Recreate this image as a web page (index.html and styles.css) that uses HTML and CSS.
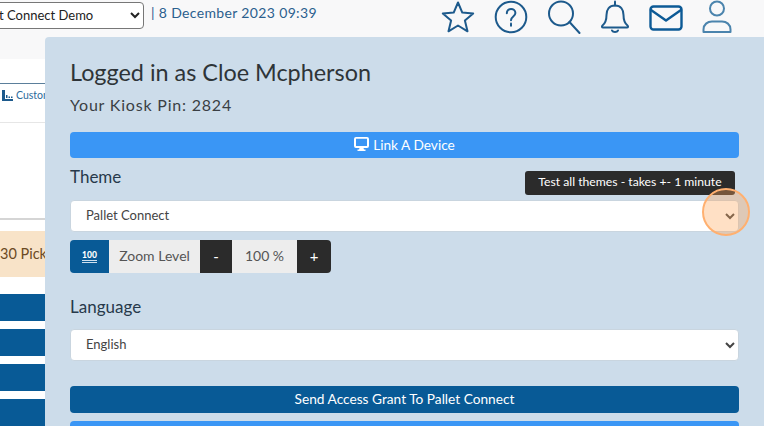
FILE: index.html
```html
<!DOCTYPE html>
<html lang="en">

<head>
    <meta charset="UTF-8">
    <meta name="viewport" content="width=device-width, initial-scale=1.0">
    <title>Pallet Connect</title>
    <link rel="stylesheet" href="styles.css">
</head>

<body>

    <!-- Top bar -->
    <header class="topbar">
        <select class="site-select">
            <option>Pallet Connect Demo</option>
        </select>
        <span class="date">| 8 December 2023 09:39</span>
        <nav class="top-icons">
            <svg class="icon" width="34" height="34" viewBox="0 0 34 34"><path d="M17 2.500l4.300 10.100 10.900.9-8.300 7.100 2.600 10.700L17 25.500l-9.500 5.800 2.600-10.700-8.300-7.100 10.900-.9z"/></svg>
            <svg class="icon" width="34" height="34" viewBox="0 0 34 34"><circle cx="17" cy="17" r="15.300"/><path d="M12.800 13.300c0-6 8.600-5.600 8.600-.3 0 3.500-4.400 3.400-4.400 7.200"/><path d="M17 23.500v2.200"/></svg>
            <svg class="icon" width="34" height="34" viewBox="0 0 34 34"><circle cx="14" cy="13.500" r="12"/><path d="M22.500 22l10 11"/></svg>
            <svg class="icon" width="30" height="34" viewBox="0 0 30 34"><path d="M15 5.500c-6 0-8.500 4.500-8.500 9.500 0 6.500-1.500 8.500-4 10.500-1 .9-.6 2 .6 2h23.800c1.200 0 1.600-1.100.6-2-2.500-2-4-4-4-10.500 0-5-2.500-9.500-8.500-9.500z"/><path d="M15 5.500V1.500"/><path d="M12 30.500c1 2 5 2 6 0"/></svg>
            <svg class="icon icon-mail" width="34" height="26" viewBox="0 0 34 26"><rect x="1.500" y="1.500" width="31" height="23" rx="3"/><path d="M2 5l15 10.500L32 5"/></svg>
            <svg class="icon icon-user" width="30" height="34" viewBox="0 0 30 34"><circle cx="15" cy="8.500" r="7"/><path d="M1.500 32v-2.500c0-5 4-8 8.500-8h10c4.500 0 8.500 3 8.500 8V32z"/></svg>
        </nav>
    </header>

    <!-- Page underneath the panel -->
    <main class="page">
        <div class="tabs">
            <svg class="tab-icon" width="11" height="11" viewBox="0 0 11 11"><path d="M0 0h3v9h8v2H0z"/><path d="M4 5h1.500v3H4zM6.500 6.500H8V8H6.500zM9 6.500h1.500V8H9z"/></svg>
            <span>Customer</span>
        </div>
        <div class="notice-area">
            <div class="notice">30 Pickups</div>
        </div>
        <div class="page-bar"></div>
        <div class="page-bar"></div>
        <div class="page-bar"></div>
        <div class="page-bar"></div>
    </main>

    <!-- Profile panel -->
    <aside class="panel">
        <h1>Logged in as Cloe Mcpherson</h1>
        <p class="pin">Your Kiosk Pin: 2824</p>

        <button class="btn btn-light-blue">
            <svg width="15" height="14" viewBox="0 0 15 14"><path d="M2 0h11a2 2 0 0 1 2 2v7a2 2 0 0 1-2 2H9.500l.5 1.500h1.500V14h-8v-1.500H5L5.500 11H2a2 2 0 0 1-2-2V2a2 2 0 0 1 2-2zm0 1.800V9h11V1.800z"/></svg>
            Link A Device
        </button>

        <label class="field-label theme-label">Theme</label>
        <select class="field-select">
            <option>Pallet Connect</option>
        </select>

        <div class="zoom-group">
            <span class="zoom-icon"><span class="hundred">100</span></span>
            <span class="zoom-text zoom-name">Zoom Level</span>
            <button class="zoom-btn zoom-minus">-</button>
            <span class="zoom-text zoom-value">100 %</span>
            <button class="zoom-btn zoom-plus">+</button>
        </div>

        <label class="field-label language-label">Language</label>
        <select class="field-select">
            <option>English</option>
        </select>

        <button class="btn btn-dark-blue">Send Access Grant To Pallet Connect</button>
        <button class="btn btn-light-blue btn-last"></button>

        <div class="tooltip">Test all themes - takes +- 1 minute</div>
        <div class="spotlight"></div>
    </aside>

</body>

</html>
```

FILE: styles.css
```css
* {
    box-sizing: border-box;
    margin: 0;
    padding: 0;
}

html,
body {
    height: 426px;
    overflow: hidden;
}

body {
    position: relative;
    font-family: 'Lato', 'Open Sans', sans-serif;
    background-color: #fff;
    color: #333;
}

.topbar {
    display: flex;
    align-items: flex-start;
    height: 59px;
    background-color: #f8f8f9;
}

.site-select {
    width: 182px;
    height: 27px;
    margin: 2px 0 0 -38px;
    padding: 0 0 2px 5px;
    font-family: inherit;
    font-size: 13px;
    color: #222;
    background-color: #fff;
    border: 1px solid #777;
    border-radius: 4px;
}

.date {
    margin: 4px 0 0 7px;
    font-size: 14px;
    letter-spacing: 0.35px;
    color: #2b5f8e;
}

.top-icons {
    display: flex;
    align-items: flex-start;
    margin-left: auto;
    margin-right: 32px;
    gap: 19px;
}

.icon {
    flex: none;
    fill: none;
    stroke: #1d5a8c;
    stroke-width: 2;
    stroke-linejoin: round;
    stroke-linecap: round;
}

.icon-mail {
    margin-top: 5px;
    stroke: #0c5a96;
    stroke-width: 2.4;
}

.icon-user {
    stroke: #4b84ad;
}

.page {
    width: 45px;
    overflow: hidden;
}

.tabs {
    display: flex;
    align-items: flex-start;
    gap: 3px;
    width: 120px;
    height: 40px;
    margin-top: 24px;
    padding: 5px 0 0 2px;
    font-size: 10.5px;
    line-height: 13px;
    color: #2b6a9b;
    border-top: 1px solid #5b7f9b;
    border-bottom: 1px solid #e6e6e6;
}

.tab-icon {
    margin-top: 1px;
    fill: #1d5a8c;
}

.notice-area {
    height: 170px;
    padding-top: 95px;
}

.notice-area::before {
    content: "";
    display: block;
    height: 2px;
    background-color: #d5d5d5;
}

.notice {
    width: 120px;
    height: 46px;
    margin-top: 11px;
    font-size: 14.5px;
    line-height: 45px;
    color: #6b4a24;
    background-color: #f8e3c8;
}

.page-bar {
    height: 27px;
    margin-top: 8px;
    background-color: #085a96;
}

.notice-area + .page-bar {
    margin-top: 1px;
}

.panel {
    position: absolute;
    top: 37px;
    left: 45px;
    right: 0;
    height: 389px;
    overflow: hidden;
    padding: 0 25px;
    background-color: #ccdcea;
    border-top-left-radius: 4px;
}

.panel h1 {
    margin-top: 19px;
    font-size: 23.4px;
    font-weight: 400;
    line-height: 32px;
    color: #2e3438;
}

.pin {
    margin-top: 5px;
    padding-bottom: 1px;
    font-size: 16px;
    line-height: 24px;
    letter-spacing: 0.8px;
    color: #3a3f44;
}

.btn {
    display: flex;
    align-items: center;
    justify-content: center;
    gap: 4px;
    width: 100%;
    height: 26px;
    padding-bottom: 2px;
    font-family: inherit;
    font-size: 13.7px;
    color: #fff;
    border: none;
    border-radius: 4px;
}

.btn svg {
    fill: #fff;
}

.btn-light-blue {
    margin-top: 14px;
    background-color: #3a96f5;
}

.btn-dark-blue {
    margin-top: 25px;
    height: 27px;
    background-color: #085a96;
}

.btn-last {
    margin-top: 8px;
}

.field-label {
    display: block;
    font-size: 17px;
    line-height: 24px;
    color: #27394a;
}

.theme-label {
    margin-top: 7px;
}

.language-label {
    margin-top: 22px;
}

.field-select {
    display: block;
    width: 100%;
    height: 32px;
    margin-top: 10px;
    padding: 0 0 2px 11px;
    font-family: inherit;
    font-size: 13px;
    color: #444;
    background-color: #fff;
    border: 1px solid #c9d5df;
    border-radius: 4px;
}

.theme-label + .field-select {
    margin-top: 11px;
}

.zoom-group {
    display: flex;
    align-items: stretch;
    width: 261px;
    height: 33px;
    margin-top: 8px;
    font-size: 14px;
    border-radius: 4px;
    overflow: hidden;
}

.zoom-icon {
    display: flex;
    align-items: center;
    justify-content: center;
    width: 39px;
    color: #fff;
    background-color: #085a96;
}

.hundred {
    font-size: 8.5px;
    font-weight: 900;
    line-height: 9px;
    border-bottom: 3px double #cfe0ee;
}

.zoom-text {
    display: flex;
    align-items: center;
    justify-content: center;
    padding-bottom: 2px;
    color: #555;
    background-color: #ededed;
}

.zoom-name {
    width: 91px;
}

.zoom-value {
    width: 65px;
}

.zoom-btn {
    padding-bottom: 2px;
    font-family: inherit;
    font-size: 15px;
    color: #fff;
    background-color: #2b2b2b;
    border: none;
}

.zoom-minus {
    width: 32px;
}

.zoom-plus {
    width: 34px;
}

.tooltip {
    position: absolute;
    top: 134px;
    left: 480px;
    width: 210px;
    height: 24px;
    font-size: 12.2px;
    line-height: 22px;
    text-align: center;
    color: #fff;
    background-color: #2b2b2b;
    border-radius: 3px;
}

.spotlight {
    position: absolute;
    top: 151px;
    left: 657px;
    width: 48px;
    height: 48px;
    background-color: rgba(255, 165, 90, 0.35);
    border: 2px solid #ffb070;
    border-radius: 50%;
}
```
